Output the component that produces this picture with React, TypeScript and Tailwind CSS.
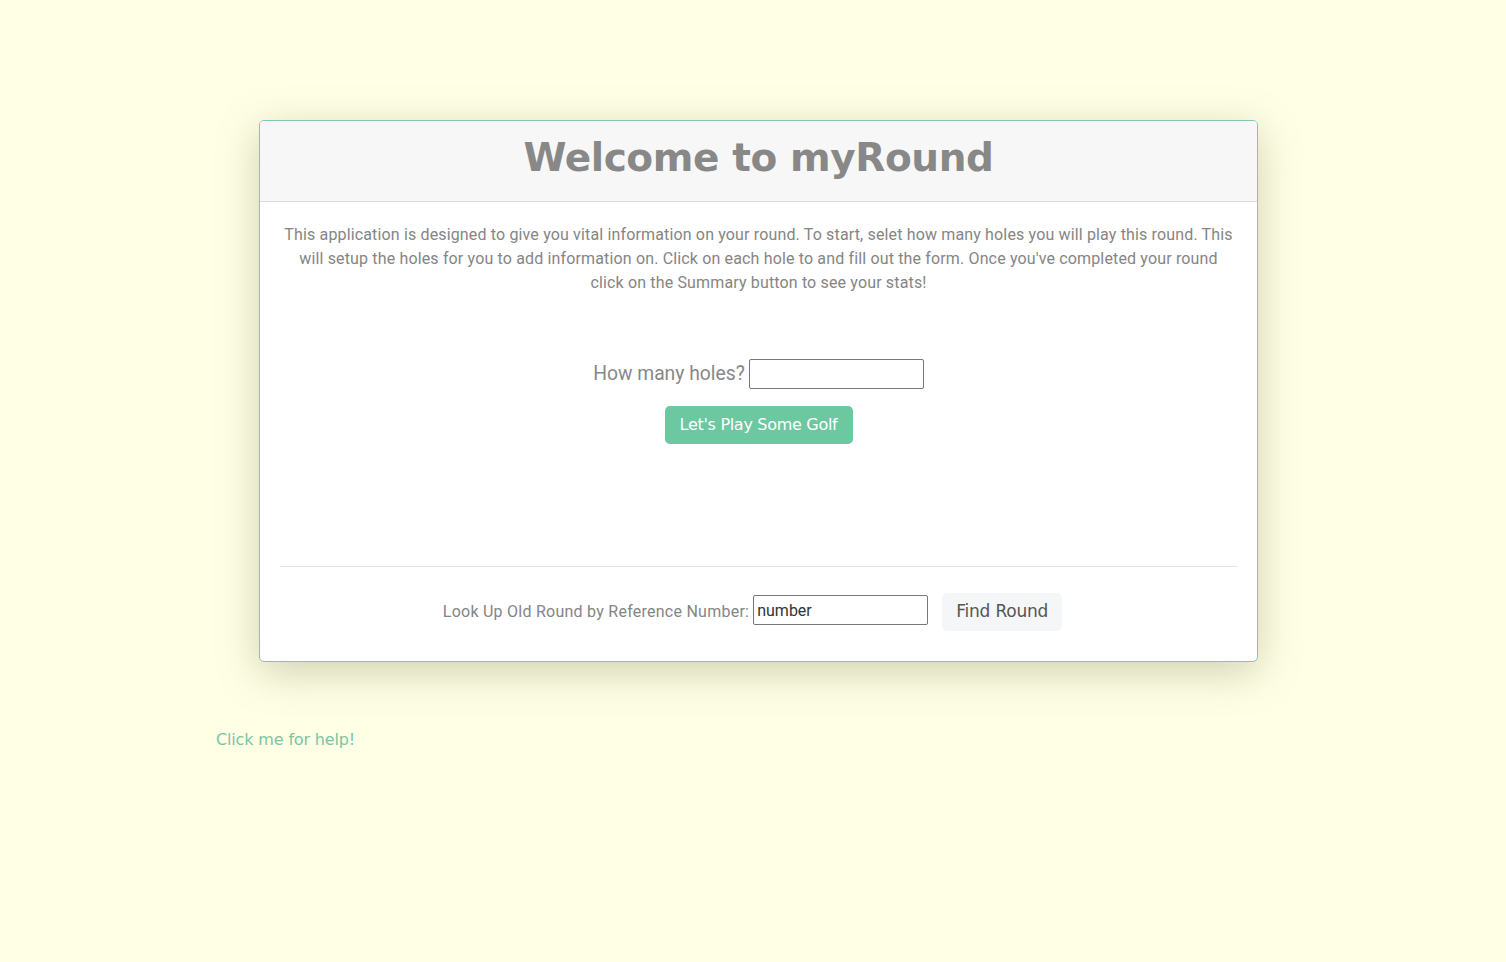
import React from 'react';

export default function App() {
  return (
    <div className="min-h-screen w-full bg-[#ffffe6] font-['Roboto',sans-serif] text-[#888]">
      <div className="pt-[120px] pl-[259px]">
        {/* Main card */}
        <div className="w-[999px] rounded-[5px] border border-[#80c9b0] bg-white shadow-[0_10px_40px_rgba(120,120,80,0.35)] overflow-hidden">
          <div className="h-[81px] bg-[#f7f7f7] border-b border-[#dcdcdc] flex items-center justify-center pb-[7px]">
            <h1 className="font-['DejaVu_Sans',sans-serif] font-bold text-[39px] tracking-[-0.4px] text-[#888] leading-none">
              Welcome to myRound
            </h1>
          </div>

          <div className="px-[20px] pt-[21px] pb-[30px]">
            <p className="text-center text-[16px] leading-[24px] tracking-[0.15px] text-[#858585] px-[4px]">
              This application is designed to give you vital information on your round. To start, selet how many holes you will play this round. This will setup the holes for you to add information on. Click on each hole to and fill out the form. Once you've completed your round click on the Summary button to see your stats!
            </p>

            <div className="mt-[64px] flex items-center justify-center gap-[4px]">
              <label className="text-[19.3px] text-[#888] leading-none">How many holes?</label>
              <input type="text" className="w-[175px] h-[30px] border border-[#777] rounded-[2px] bg-white px-1 outline-none" />
            </div>

            <div className="mt-[17px] flex justify-center">
              <button className="h-[38px] w-[188px] rounded-[5px] bg-[#6cc8a0] text-white">
                <span className="font-['DejaVu_Sans',sans-serif] text-[16px] tracking-[-0.3px]">Let's Play Some Golf</span>
              </button>
            </div>

            <div className="mt-[122px] border-t border-[#e3e3e3]" />

            <div className="mt-[26px] pr-[12px] flex items-center justify-center">
              <label className="text-[16px] tracking-[0.25px] text-[#858585]">Look Up Old Round by Reference Number:</label>
              <input
                type="text"
                defaultValue="number"
                className="ml-[4px] mt-[-4px] w-[175px] h-[30px] border border-[#777] rounded-[2px] bg-white px-[3px] text-[16px] text-[#333] outline-none"
              />
              <button className="ml-[14px] h-[38px] w-[120px] rounded-[5px] bg-[#f5f6f7] text-[#555]">
                <span className="font-['DejaVu_Sans',sans-serif] text-[17px] tracking-[-0.2px]">Find Round</span>
              </button>
            </div>
          </div>
        </div>
      </div>

      <div className="pl-[216px] mt-[66px]">
        <a className="text-[16px] text-[#7cc4a7] font-['DejaVu_Sans',sans-serif] tracking-[-0.15px] cursor-pointer">
          Click me for help!
        </a>
      </div>
    </div>
  );
}
